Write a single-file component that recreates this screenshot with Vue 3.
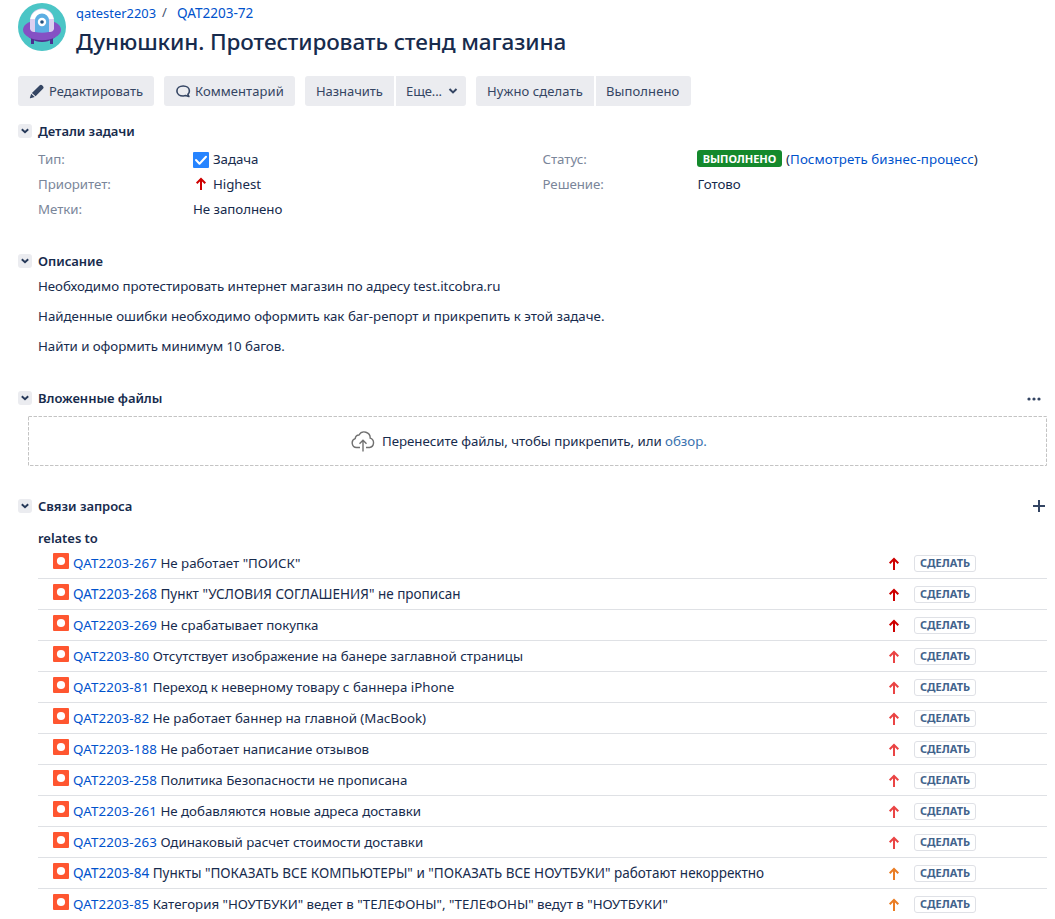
<script setup>
const links = [
  { key: 'QAT2203-267', title: 'Не работает "ПОИСК"', level: 'highest' },
  { key: 'QAT2203-268', title: 'Пункт "УСЛОВИЯ СОГЛАШЕНИЯ" не прописан', level: 'highest', caps: true },
  { key: 'QAT2203-269', title: 'Не срабатывает покупка', level: 'highest' },
  { key: 'QAT2203-80', title: 'Отсутствует изображение на банере заглавной страницы', level: 'high' },
  { key: 'QAT2203-81', title: 'Переход к неверному товару с баннера iPhone', level: 'high' },
  { key: 'QAT2203-82', title: 'Не работает баннер на главной (MacBook)', level: 'high' },
  { key: 'QAT2203-188', title: 'Не работает написание отзывов', level: 'high' },
  { key: 'QAT2203-258', title: 'Политика Безопасности не прописана', level: 'high' },
  { key: 'QAT2203-261', title: 'Не добавляются новые адреса доставки', level: 'high' },
  { key: 'QAT2203-263', title: 'Одинаковый расчет стоимости доставки', level: 'high' },
  { key: 'QAT2203-84', title: 'Пункты "ПОКАЗАТЬ ВСЕ КОМПЬЮТЕРЫ" и "ПОКАЗАТЬ ВСЕ НОУТБУКИ" работают некорректно', level: 'medium', caps: true },
  { key: 'QAT2203-85', title: 'Категория "НОУТБУКИ" ведет в "ТЕЛЕФОНЫ", "ТЕЛЕФОНЫ" ведут в "НОУТБУКИ"', level: 'medium' },
]
</script>

<template>
  <div class="page">
    <header class="head">
      <svg class="avatar" width="48" height="48" viewBox="0 0 48 48">
        <circle cx="24" cy="24" r="24" fill="#4bc5c6" />
        <path d="M14.500 34v7M33.500 34v7" fill="none" stroke="#4b2f91" stroke-width="3" />
        <ellipse cx="24" cy="29" rx="15" ry="10" fill="#51308f" />
        <ellipse cx="24" cy="26.800" rx="19" ry="10.400" fill="#8550c4" />
        <path d="M12 26V17.500a12 12 0 0 1 24 0V26q-1 3-4 3H16q-3 0-4-3z" fill="#dccff0" />
        <path d="M12.200 16a12 12 0 0 1 23.600 0z" fill="#fff" />
        <path d="M17 29V17.500a7 7 0 0 1 14 0V29q-7 1.500-14 0z" fill="#5caee3" />
        <circle cx="24" cy="19" r="4.200" fill="#fff" />
        <circle cx="24" cy="19" r="1.800" fill="#24517e" />
      </svg>
      <div class="head-text">
        <nav class="crumbs"><a class="project">qatester2203</a><span class="slash">/</span><a class="issue">QAT2203-72</a></nav>
        <h1>Дунюшкин. Протестировать стенд магазина</h1>
      </div>
    </header>

    <div class="toolbar">
      <button class="btn w-edit">
        <svg width="16" height="16" viewBox="0 0 16 16"><path d="M10.800 2.300q1.200-1 2.300 0l1.100 1.100q.9 1 0 2.100L6.600 13.300 2.900 9.900zM2.200 10.700l3.500 3.300-4.300 1.300q-.6.100-.5-.5z" fill="#344563" /></svg>
        Редактировать
      </button>
      <button class="btn w-comment">
        <svg width="16" height="16" viewBox="0 0 16 16"><path d="M8.200 3c-3.600 0-6.300 2.100-6.300 5s2.700 5 6.300 5q1.300 0 2.400-.4l3.300.9-1-2.200q1.500-1.400 1.500-3.300c0-2.900-2.600-5-6.200-5z" fill="none" stroke="#344563" stroke-width="1.600" stroke-linejoin="round" /></svg>
        Комментарий
      </button>
      <div class="group">
        <button class="btn w-assign">Назначить</button>
        <button class="btn w-more">Еще...<svg width="10" height="8" viewBox="0 0 10 8"><path d="M1.500 2 5 5.400 8.500 2" fill="none" stroke="#344563" stroke-width="2" /></svg></button>
      </div>
      <div class="group">
        <button class="btn w-todo">Нужно сделать</button>
        <button class="btn w-done">Выполнено</button>
      </div>
    </div>

    <section class="details">
      <div class="section-head">
        <span class="toggle"><svg width="8" height="6" viewBox="0 0 8 6"><path d="M.8 1.200 4 4.200l3.200-3" fill="none" stroke="#253858" stroke-width="1.900" /></svg></span>
        <h2>Детали задачи</h2>
      </div>
      <div class="fields">
        <span class="label">Тип:</span>
        <span class="value">
          <svg class="type" width="16" height="16" viewBox="0 0 16 16"><rect width="16" height="16" rx="1" fill="#2684ff" /><path d="m3 8 3.500 3.700L13 4.800" fill="none" stroke="#fff" stroke-width="2" stroke-linecap="round" stroke-linejoin="round" /></svg>Задача
        </span>
        <span class="label">Статус:</span>
        <span class="value"><b class="done">ВЫПОЛНЕНО</b><span class="flow">(<a>Посмотреть бизнес-процесс</a>)</span></span>
        <span class="label">Приоритет:</span>
        <span class="value">
          <svg class="arrow highest" width="16" height="16" viewBox="0 0 16 16"><path d="M8 14V3.500M3.700 7.300 8 3l4.300 4.300" /></svg>Highest
        </span>
        <span class="label">Решение:</span>
        <span class="value">Готово</span>
        <span class="label">Метки:</span>
        <span class="value">Не заполнено</span>
      </div>
    </section>

    <section class="description">
      <div class="section-head">
        <span class="toggle"><svg width="8" height="6" viewBox="0 0 8 6"><path d="M.8 1.200 4 4.200l3.200-3" fill="none" stroke="#253858" stroke-width="1.900" /></svg></span>
        <h2>Описание</h2>
      </div>
      <p class="tight">Необходимо протестировать интернет магазин по адресу test.itcobra.ru</p>
      <p>Найденные ошибки необходимо оформить как баг-репорт и прикрепить к этой задаче.</p>
      <p class="tight">Найти и оформить минимум 10 багов.</p>
    </section>

    <section class="attachments">
      <div class="section-head">
        <span class="toggle"><svg width="8" height="6" viewBox="0 0 8 6"><path d="M.8 1.200 4 4.200l3.200-3" fill="none" stroke="#253858" stroke-width="1.900" /></svg></span>
        <h2>Вложенные файлы</h2>
        <svg class="more" width="14" height="4" viewBox="0 0 14 4"><g fill="#344563"><circle cx="2" cy="2" r="1.600" /><circle cx="7" cy="2" r="1.600" /><circle cx="12" cy="2" r="1.600" /></g></svg>
      </div>
      <div class="dropzone">
        <svg class="frame" width="1019" height="50"><rect x=".5" y=".5" width="1018" height="49" fill="none" stroke="#c4c4c4" stroke-dasharray="3.500 1.500" /></svg>
        <svg width="24" height="21" viewBox="0 0 24 21"><path d="M9 16.500H5.500A4.600 4.600 0 0 1 4.200 7.600 4 4 0 0 1 8 4a6 6 0 0 1 11.200 3.200 4.800 4.800 0 0 1-.7 9.300H15M12 20.500V10M8.500 12.800 12 9.300l3.500 3.500" fill="none" stroke="#707070" stroke-width="1.400" /></svg>
        <span>Перенесите файлы, чтобы прикрепить, или <a>обзор.</a></span>
      </div>
    </section>

    <section class="relations">
      <div class="section-head">
        <span class="toggle"><svg width="8" height="6" viewBox="0 0 8 6"><path d="M.8 1.200 4 4.200l3.200-3" fill="none" stroke="#253858" stroke-width="1.900" /></svg></span>
        <h2>Связи запроса</h2>
        <svg class="plus" width="12" height="12" viewBox="0 0 12 12"><path d="M6 0v12M0 6h12" stroke="#344563" stroke-width="2" /></svg>
      </div>
      <h3>relates to</h3>
      <ul>
        <li v-for="l in links" :key="l.key">
          <svg class="bug" width="16" height="16" viewBox="0 0 16 16"><rect width="16" height="16" rx="1" fill="#ff5630" /><circle cx="8" cy="8" r="4.100" fill="#fff" /></svg>
          <span class="summary" :class="{ caps: l.caps }"><a>{{ l.key }}</a> {{ l.title }}</span>
          <svg class="arrow" :class="l.level" width="16" height="16" viewBox="0 0 16 16"><path d="M8 14V3.500M3.700 7.300 8 3l4.300 4.300" /></svg>
          <span class="todo">СДЕЛАТЬ</span>
        </li>
      </ul>
    </section>
  </div>
</template>

<style>
body { margin: 0; background: #fff; }
</style>

<style scoped>
.page {
  box-sizing: border-box;
  width: 1055px;
  height: 919px;
  padding: 3px 8px 0 18px;
  overflow: hidden;
  color: #172b4d;
  font: 13.3px/20px "Noto Sans", "Open Sans", sans-serif;
}
svg { display: block; flex: none; }
a { color: #0052cc; }
h1, h2, h3, p, ul { margin: 0; padding: 0; }
.head { display: flex; gap: 10px; height: 73px; }
.crumbs { display: flex; height: 20px; }
.project { width: 86px; font-size: 12.9px; }
.slash { width: 15px; margin-top: -1px; color: #42526e; font-size: 13px; }
.issue { font-size: 13.6px; letter-spacing: -.05px; }
h1 { margin-top: 5px; font-size: 22.5px; font-weight: 500; line-height: 28px; letter-spacing: -.11px; white-space: nowrap; }
.toolbar { display: flex; gap: 10px; height: 30px; }
.group { display: flex; gap: 2px; }
.btn {
  display: flex;
  align-items: center;
  box-sizing: border-box;
  height: 30px;
  padding: 0 0 0 11px;
  border: 0;
  border-radius: 3px;
  background: #ebecf0;
  color: #344563;
  font: 13px/20px "Noto Sans", "Open Sans", sans-serif;
  white-space: nowrap;
}
.btn > svg:first-child { margin-right: 4px; }
.group .btn:first-child { border-radius: 3px 0 0 3px; }
.group .btn:last-child { border-radius: 0 3px 3px 0; }
.w-edit { width: 136px; }
.w-comment { width: 131px; letter-spacing: .07px; }
.w-assign { width: 89px; letter-spacing: -.05px; }
.w-more { width: 70px; padding-left: 10px; letter-spacing: -.1px; }
.w-more > svg:first-child { margin: 0 0 0 6px; }
.w-todo { width: 118px; letter-spacing: .1px; }
.w-done { width: 95px; padding-left: 10px; letter-spacing: .1px; }

.section-head { display: flex; align-items: center; height: 20px; }
.toggle { display: flex; align-items: center; justify-content: center; width: 14px; height: 14px; border-radius: 3px; background: #ebecf0; }
h2, h3 { font-size: 13px; font-weight: 600; line-height: 20px; letter-spacing: -.04px; }
h2 { margin-left: 6px; }
.more { margin: 2px 6px 0 auto; }
.plus { margin: 0 2px 0 auto; }

.details { box-sizing: border-box; height: 145px; padding-top: 15px; }
.fields { display: grid; grid-template-columns: 155px 349.500px 155px 1fr; grid-auto-rows: 25px; margin: 5px 0 0 20px; align-items: center; letter-spacing: -.05px; }
.label { color: #7a869a; }
.value { display: flex; align-items: center; height: 20px; }
.type, .value .arrow { margin-right: 4px; }
.type { margin-top: 2px; }
.arrow { fill: none; stroke-width: 2; }
.arrow.highest { stroke: #ce0000; }
.arrow.high { stroke: #ea4444; }
.arrow.medium { stroke: #ea7d24; }
.done { display: block; box-sizing: border-box; width: 85px; height: 17px; margin: 0 4px 0 -.5px; border-radius: 3px; background: #14892c; color: #fff; font-size: 11px; line-height: 17px; text-align: center; }
.flow { letter-spacing: .07px; }

.description { height: 137px; }
.description p { height: 20px; margin: 5px 0 0 20px; }
.description p + p { margin-top: 10px; }
.description .tight { letter-spacing: -.05px; }

.attachments { height: 108px; }
.dropzone { position: relative; display: flex; align-items: center; height: 50px; margin: 8px 0 0 10px; padding-left: 323px; box-sizing: border-box; }
.dropzone .frame { position: absolute; inset: 0; }
.dropzone span { margin-left: 7px; letter-spacing: -.04px; }
.dropzone a { color: #3b73af; }

h3 { margin: 12px 0 0 20px; }
ul { margin-left: 20px; list-style: none; }
li { display: flex; align-items: center; box-sizing: border-box; height: 31px; padding-left: 15px; border-bottom: 1px solid #dfe1e5; }
.bug { margin: -4px 4px 0 0; }
.summary { width: 813px; white-space: nowrap; }
.summary a { letter-spacing: .12px; }
.caps { font-size: 13.5px; }
.caps a { letter-spacing: 0; }
li .arrow { margin-top: 1px; }
.todo { box-sizing: border-box; width: 62px; height: 17px; margin: 1px 0 0 12px; border: 1px solid #dfe1e6; border-radius: 3px; color: #42638c; font-size: 11px; font-weight: 700; line-height: 14px; text-align: center; }
</style>
